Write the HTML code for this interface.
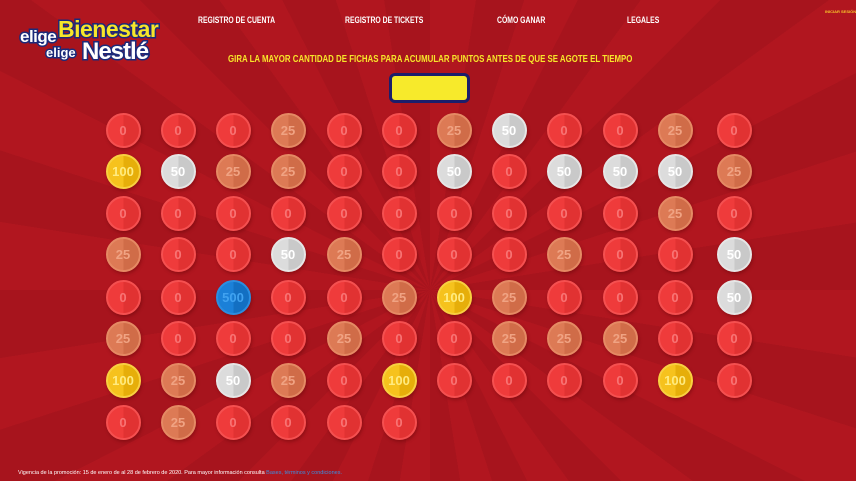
<!DOCTYPE html>
<html><head><meta charset="utf-8"><style>
*{margin:0;padding:0;box-sizing:border-box}
body{width:856px;height:481px;overflow:hidden;position:relative;font-family:"Liberation Sans",sans-serif;
background:repeating-conic-gradient(from 0deg at 430px 290px,#b1161f 0deg 9deg,#a7141d 9deg 18deg);}
.nav{position:absolute;top:15px;color:#fff;font-size:9.5px;font-weight:bold;transform:scaleX(0.72);transform-origin:left;white-space:nowrap}
.title{position:absolute;top:53px;left:228px;color:#f7e62a;font-size:10.5px;font-weight:bold;transform:scaleX(0.75);transform-origin:left;white-space:nowrap}
.box{position:absolute;left:389px;top:73px;width:81px;height:30px;background:#f7ea2b;border:3px solid #1b1e6b;border-radius:6px}
.coin{position:absolute;width:35px;height:35px;border-radius:50%;display:flex;align-items:center;justify-content:center;font-weight:bold;font-size:13px;box-shadow:1px 2px 3px rgba(80,0,0,.35)}
.logo{position:absolute;left:18px;top:16px}
.foot{position:absolute;left:18px;top:470px;color:#fff;font-size:5.5px}
.foot span{color:#3a8fe0}
</style></head><body>
<div class="logo">
<div style="position:absolute;left:2px;top:11px;color:#fff;font-weight:bold;font-size:17px;-webkit-text-stroke:3px #1b2a7a;paint-order:stroke fill;letter-spacing:-0.5px">elige</div>
<div style="position:absolute;left:40px;top:0px;color:#f7e62a;font-weight:bold;font-size:23px;-webkit-text-stroke:3px #1b2a7a;paint-order:stroke fill;letter-spacing:-0.5px;white-space:nowrap">Bienestar</div>
<div style="position:absolute;left:28px;top:29px;color:#fff;font-weight:bold;font-size:13px;-webkit-text-stroke:3px #1b2a7a;paint-order:stroke fill">elige</div>
<div style="position:absolute;left:64px;top:22px;color:#fff;font-weight:bold;font-size:24px;-webkit-text-stroke:3px #1b2a7a;paint-order:stroke fill;letter-spacing:-1px">Nestlé</div>
</div>
<div class="nav" style="left:198px">REGISTRO DE CUENTA</div>
<div class="nav" style="left:345px">REGISTRO DE TICKETS</div>
<div class="nav" style="left:497px">CÓMO GANAR</div>
<div class="nav" style="left:627px">LEGALES</div>
<div style="position:absolute;left:825px;top:9px;color:#f7c52a;font-size:4px;font-weight:bold;white-space:nowrap">INICIAR SESIÓN</div>
<div class="title">GIRA LA MAYOR CANTIDAD DE FICHAS PARA ACUMULAR PUNTOS ANTES DE QUE SE AGOTE EL TIEMPO</div>
<div class="box"></div>
<div id="g"></div>
<div class="foot">Vigencia de la promoción: 15 de enero de al 28 de febrero de 2020. Para mayor información consulta <span>Bases, términos y condiciones.</span></div>
<script>
var rows=[[0,0,0,25,0,0,25,50,0,0,25,0],[100,50,25,25,0,0,50,0,50,50,50,25],[0,0,0,0,0,0,0,0,0,0,25,0],[25,0,0,50,25,0,0,0,25,0,0,50],[0,0,500,0,0,25,100,25,0,0,0,50],[25,0,0,0,25,0,0,25,25,25,0,0],[100,25,50,25,0,100,0,0,0,0,100,0],[0,25,0,0,0,0]];
var xs=[123,178,233,288,344,399,454,509,564,620,675,734],ys=[130,171,213,254,297,338,380,422];
var st={0:['#ef3b3b','#e13232','#f87474','#f55050'],25:['#dd7a55','#d06c48','#f0a383','#e58a64'],50:['#dcdcdc','#c9c9c9','#ffffff','#e6e6e6'],100:['#f6c21d','#e6ae0a','#ffeb80','#f8d040'],500:['#1b80d8','#136fc2','#40a2f0','#2b8ee0']};
var h='';rows.forEach(function(r,i){r.forEach(function(v,j){var c=st[v];
h+='<div class="coin" style="left:'+(xs[j]-17.5)+'px;top:'+(ys[i]-17.5)+'px;background:linear-gradient(90deg,'+c[0]+' 50%,'+c[1]+' 50%);border:2px solid '+c[3]+';color:'+c[2]+'">'+v+'</div>';});});
document.getElementById('g').innerHTML=h;
</script>
</body></html>
